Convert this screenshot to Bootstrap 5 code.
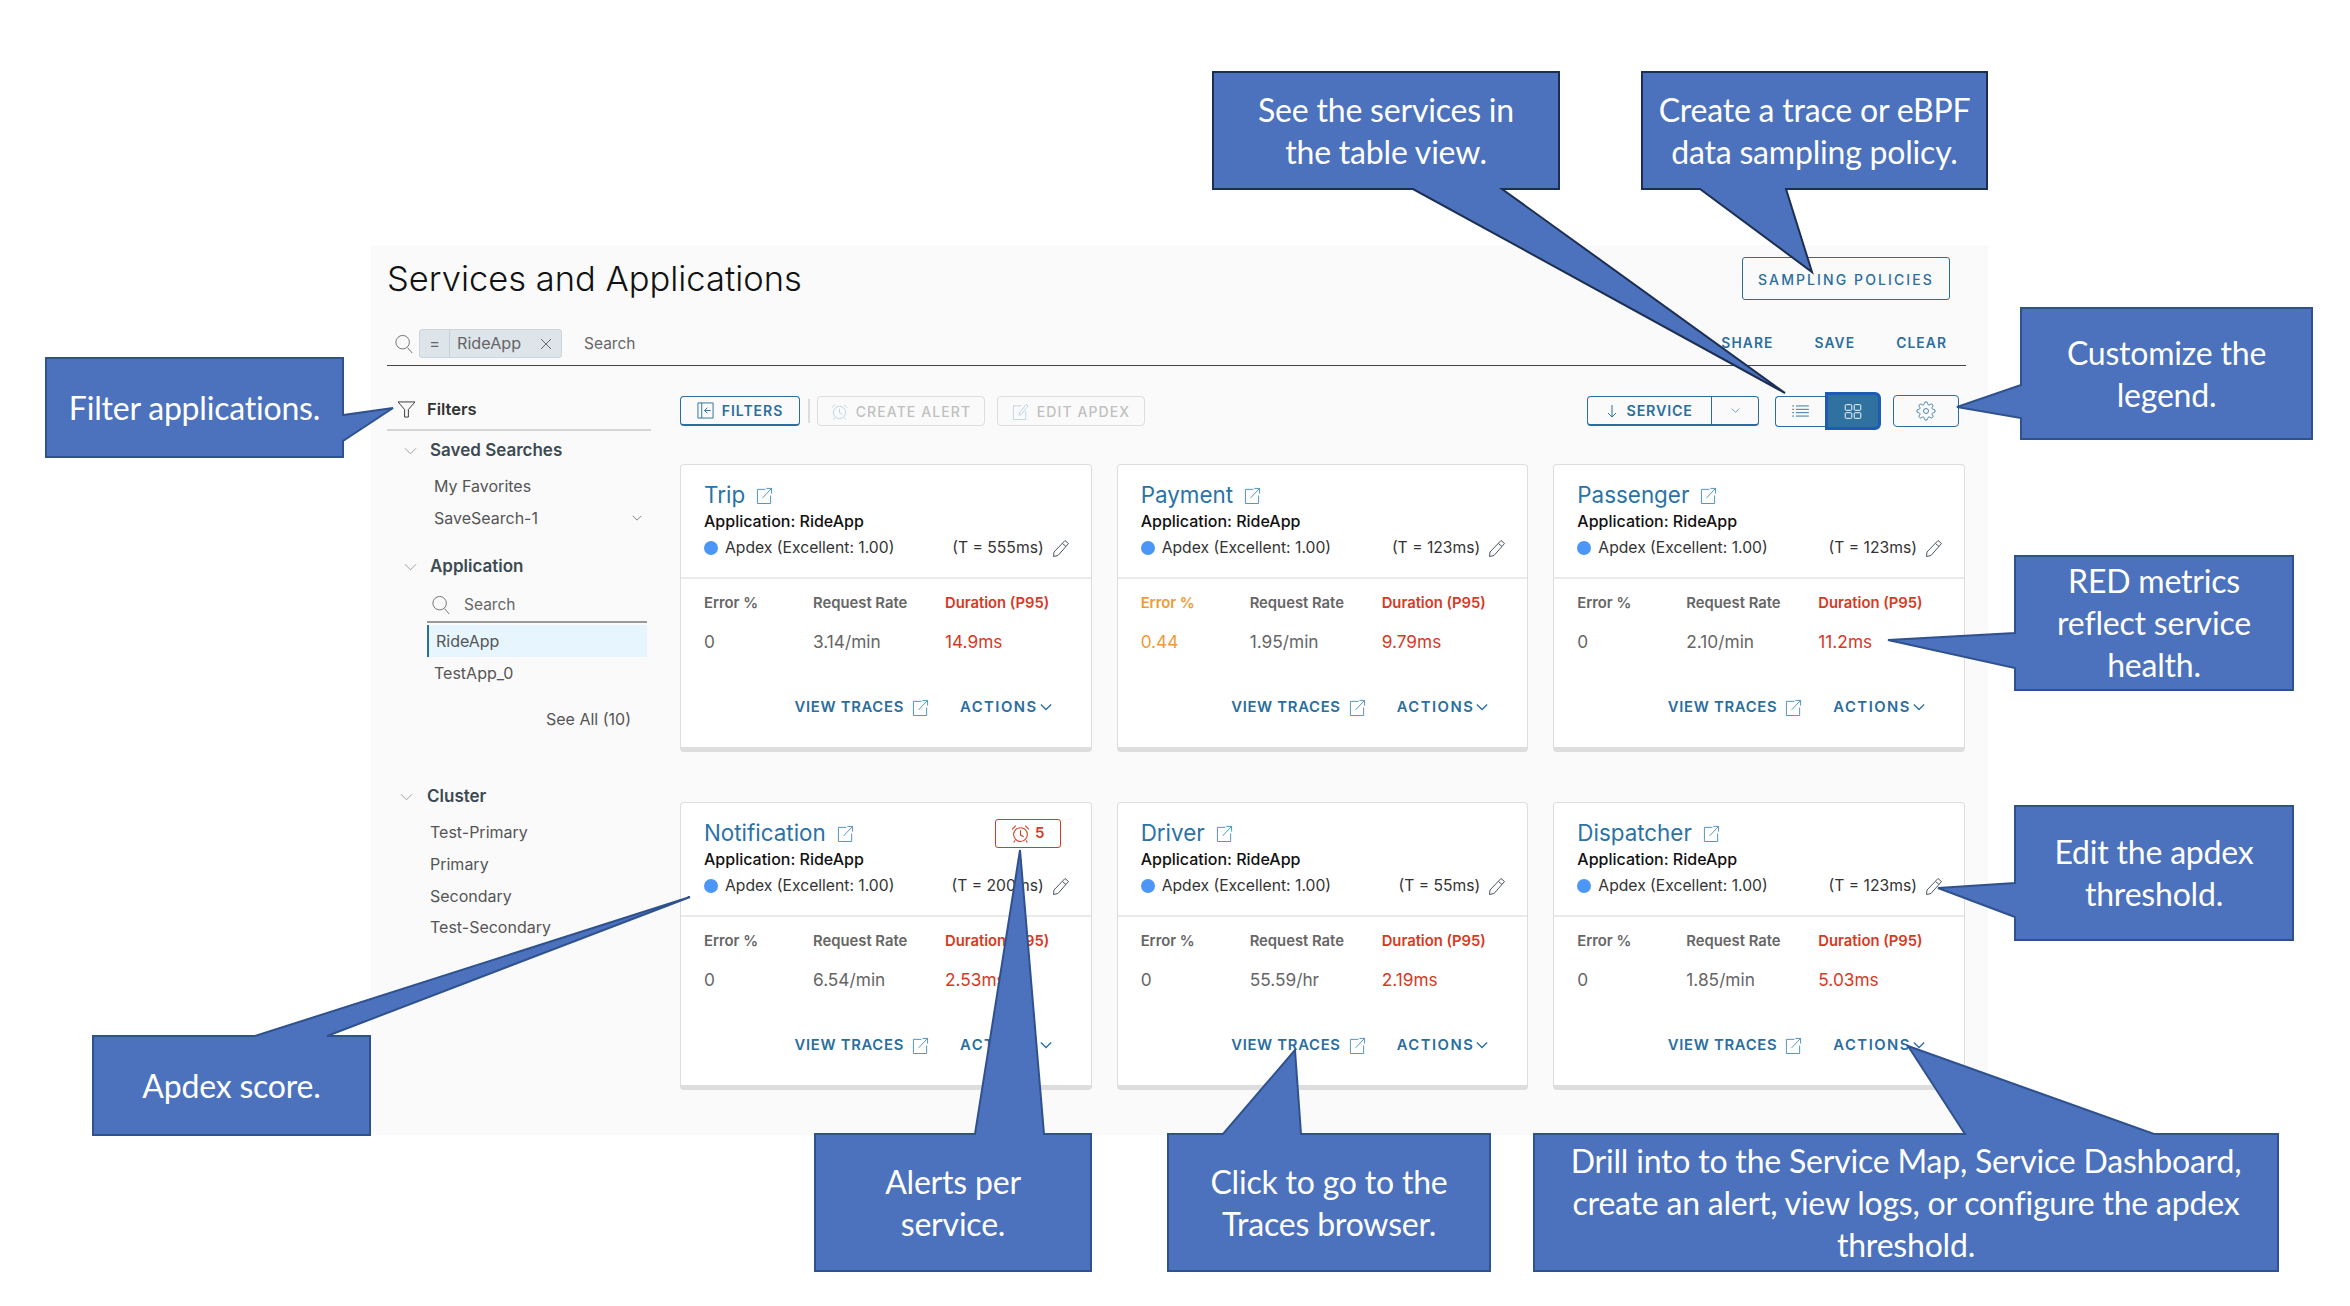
<!DOCTYPE html>
<html lang="en">
<head>
    <meta charset="UTF-8">
    <title>Services and Applications</title>
    <link href="https://cdn.jsdelivr.net/npm/bootstrap@5.3.0/dist/css/bootstrap.min.css" rel="stylesheet">
    <style>
        body {
            position: relative;
            width: 2350px;
            height: 1306px;
            overflow: hidden;
            background: #fff;
            font-family: Inter, "Liberation Sans", sans-serif;
            color: #444;
        }
        .ico { fill: none; stroke: currentColor; stroke-width: 1; flex: none; }
        .svc-panel {
            width: 1617px;
            height: 890px;
            margin: 245px 0 0 371px;
            padding: 12px 22px 0 16px;
            background: #fafafa;
        }
        .svc-head { height: 43px; }
        .svc-title { font-size: 34.5px; font-weight: 300; line-height: 43px; color: #111; margin: 0; }
        .btn-sampling {
            height: 43px;
            width: 208px;
            margin-right: 16px;
            padding: 2px 0 0;
            font-size: 14px;
            font-weight: 500;
            letter-spacing: 2.1px;
            color: #2b6e9e;
            border: 1px solid #2b6e9e;
            border-radius: 3px;
        }
        .svc-search { height: 44px; margin-top: 22px; border-bottom: 1px solid #444; }
        .search-mag { color: #666; margin: 0 6px 0 8px; }
        .chip-box {
            height: 29px;
            width: 143px;
            background: #dde4ea;
            border: 1px solid #cdd5dc;
            border-radius: 3px;
            font-size: 16.2px;
            color: #666;
        }
        .chip-eq { width: 30px; border-right: 1px solid #c8d0d7; text-align: center; }
        .chip-val { padding-left: 7px; gap: 19px; }
        .search-word { margin-left: 22px; font-size: 15.5px; color: #666; }
        .link-trio { gap: 41px; margin-right: 19px; font-size: 13.8px; font-weight: 600; letter-spacing: 1.1px; color: #2b6e9e; }
        .side-col { width: 264px; padding-top: 22px; margin-right: 29px; flex: none; }
        .side-filters { height: 43px; padding: 2px 0 0 10px; border-bottom: 2px solid #d5d5d5; font-size: 16.5px; font-weight: 600; color: #333; gap: 11px; }
        .side-h { height: 32px; font-size: 17px; font-weight: 600; color: #3c4a52; }
        .side-h svg { color: #999; margin: 0 13px 0 17px; }
        .side-saved { margin-top: 3.5px; }
        .side-i { height: 32px; padding-left: 47px; font-size: 16px; color: #555; }
        .side-i svg { margin-right: 9px; color: #555; }
        .side-c { margin-top: 46px; }
        .side-c .side-h svg { margin: 0 14px 0 13px; }
        .side-c .side-i { padding-left: 43px; height: 31.7px; }
        .side-first { margin-top: 3px; }
        .side-app { margin-top: 17px; }
        .side-more { margin-top: 14px; padding-right: 20px; }
        .app-find { height: 33px; margin: 7px 4px 2px 40px; border-bottom: 2px solid #999; font-size: 15.5px; color: #666; gap: 14px; padding-left: 5px; }
        .app-on { height: 32px; margin: 0 4px 0 40px; padding-left: 7px; background: #e6f5fe; border-left: 2px solid #2b6e9e; font-size: 16px; color: #555; }
        .main-col { width: 1286px; padding-top: 30px; flex: none; }
        .bar-top { height: 30px; margin-bottom: 38px; }
        .btn-tool {
            height: 30px;
            padding: 0;
            font-size: 14px;
            font-weight: 600;
            letter-spacing: 1px;
            color: #2b6e9e;
            border: 1px solid #2b6e9e;
            border-bottom-width: 2px;
            border-radius: 4px;
            gap: 8px;
        }
        .btn-tool:disabled { color: #c0c0c0; border: 1px solid #ddd; opacity: 1; font-weight: 500; letter-spacing: 1.1px; }
        .btn-tool:disabled svg { color: #bcd4e4; }
        .w-filters { width: 120px; }
        .bar-sep { width: 2px; height: 24px; background: #ddd; margin: 0 7px 0 8px; }
        .w-alert { width: 168px; margin-right: 12px; }
        .w-apdex { width: 148px; }
        .sort-split { width: 172px; height: 30px; border: 1px solid #2b6e9e; border-bottom-width: 2px; border-radius: 4px; font-size: 14.3px; font-weight: 600; letter-spacing: .8px; color: #2b6e9e; }
        .sort-a { width: 125px; gap: 10px; border-right: 1px solid #2b6e9e; }
        .sort-b { width: 46px; }
        .view-pair { margin-left: 16px; color: #2b6e9e; }
        .view-list { width: 50px; height: 31px; border: 1px solid #2b6e9e; border-right: 0; border-radius: 4px 0 0 4px; }
        .view-grid { width: 56px; height: 38px; margin: 0; background: #2f719f; border: 3px solid #1d5cb4; border-radius: 0 6px 6px 0; color: #fff; }
        .view-gear { width: 66px; height: 32px; margin: 0 7px 0 12px; border: 1px solid #2b6e9e; border-radius: 4px; color: #2b6e9e; }
        .svc-row { --bs-gutter-x: 25px; --bs-gutter-y: 50px; width: 1310px; }
        .svc-card { height: 288px; border-radius: 4px; background: #fff; border: 1px solid #ddd; border-bottom: 5px solid #ddd; }
        .svc-card-top { height: 114px; padding: 16px 21px 0 23px; border-bottom: 2px solid #eaeaea; }
        .svc-name-row { height: 28px; }
        .svc-name { font-size: 22.4px; line-height: 28px; color: #2b72a6; gap: 11px; }
        .svc-name svg { color: #4a8fbd; }
        .alert-tag { width: 66px; height: 29px; margin-right: 9px; border: 1px solid #d63a25; border-radius: 3px; color: #d63a25; font-size: 15px; font-weight: 600; gap: 5px; }
        .svc-app { height: 22px; margin-top: 1px; font-size: 16px; font-weight: 500; color: #111; line-height: 22px; }
        .svc-apdex { height: 22px; margin-top: 5px; font-size: 15.7px; line-height: 22px; color: #333; }
        .apdex-dot { width: 14px; height: 14px; border-radius: 50%; background: #4c96f7; margin-right: 7px; }
        .svc-t { margin-right: 8px; }
        .svc-edit { color: #4a5862; }
        .svc-card-body { padding: 14px 0 0 23px; }
        .stat-grid { display: grid; grid-template-columns: 109px 132px 1fr; }
        .stat-l { height: 20px; font-size: 14.8px; font-weight: 600; line-height: 20px; color: #666; }
        .stat-v { height: 24px; margin-top: 17px; font-size: 17.3px; line-height: 24px; color: #666; }
        .is-warn { color: #f09a35; }
        .is-red { color: #d63a25; }
        .svc-acts { height: 24px; margin-top: 41px; padding-right: 39px; font-size: 14.8px; font-weight: 600; letter-spacing: .7px; color: #2b6e9e; }
        .svc-acts svg { color: #4a8fbd; }
        .act-traces { gap: 8px; margin-right: 31px; }
        .act-more { gap: 2px; letter-spacing: 1.5px; }
        .act-more svg { color: #2b6e9e; stroke-width: 1.5; }
        .note-layer { position: absolute; inset: 0; width: 2350px; height: 1306px; pointer-events: none; }
        .note-layer path { fill: #4c72bd; stroke: #2f528f; stroke-width: 2; stroke-linejoin: miter; }
        .note-layer path.is-dark { stroke: #1c2f52; }
        .note {
            position: absolute;
            display: flex;
            align-items: center;
            justify-content: center;
            text-align: center;
            color: #fff;
            font-family: Lato, "Liberation Sans", sans-serif;
            font-size: 32px;
            line-height: 42px;
            letter-spacing: -.2px;
        }
    </style>
</head>
<body>
    <svg width="0" height="0" class="position-absolute">
        <symbol id="i-search" viewBox="0 0 20 22"><circle cx="8.5" cy="9" r="7.5"/><path d="M14 15l5 6"/></symbol>
        <symbol id="i-funnel" viewBox="0 0 20 18"><path d="M1 1h18l-7 8v8H8V9z"/></symbol>
        <symbol id="i-down" viewBox="0 0 14 8"><path d="M1 1l6 6 6-6"/></symbol>
        <symbol id="i-x" viewBox="0 0 12 12"><path d="M1 1l10 10M11 1L1 11"/></symbol>
        <symbol id="i-ext" viewBox="0 0 18 18"><path d="M10 2.5H1.500v15h14V9M7 11.500 16.500 1.500M11 1.500h5.500V7"/></symbol>
        <symbol id="i-pencil" viewBox="0 0 18 18"><path d="M13 1.500l3.500 3L6 16.500l-4.500 1 .5-4.500zM10.500 4.500l3.500 3"/></symbol>
        <symbol id="i-alarm" viewBox="0 0 18 18"><circle cx="9" cy="10" r="6.500"/><path d="M9 6v4.500l3 1.500M1 5l3.500-3.500M17 5l-3.500-3.500M4 15.500L2.500 17.500M14 15.500l1.500 2"/></symbol>
        <symbol id="i-panel" viewBox="0 0 18 18"><path d="M1 1h16v16H1zM5 1v16M14.500 9H8M11 6L8 9l3 3"/></symbol>
        <symbol id="i-edit" viewBox="0 0 18 18"><path d="M10 3H1.500v14.500h13V9M8 10.500L15 1.500l2 1.500-7 9-2.500 1z"/></symbol>
        <symbol id="i-arrow" viewBox="0 0 10 14"><path d="M5 1v12M1 9l4 4 4-4"/></symbol>
        <symbol id="i-list" viewBox="0 0 18 13"><path d="M0 1h2M4 1h14M0 4.700h2M4 4.700h14M0 8.300h2M4 8.300h14M0 12h2M4 12h14"/></symbol>
        <symbol id="i-grid" viewBox="0 0 18 16"><rect x=".7" y=".7" width="7" height="6" rx="1"/><rect x="10.300" y=".7" width="7" height="6" rx="1"/><rect x=".7" y="9.300" width="7" height="6" rx="1"/><rect x="10.300" y="9.300" width="7" height="6" rx="1"/></symbol>
        <symbol id="i-gear" viewBox="0 0 24 24"><circle cx="12" cy="12" r="3"/><path d="M19.400 15a1.650 1.650 0 0 0 .33 1.820l.06.06a2 2 0 0 1 0 2.830 2 2 0 0 1-2.830 0l-.06-.06a1.650 1.650 0 0 0-1.820-.33 1.650 1.650 0 0 0-1 1.510V21a2 2 0 0 1-2 2 2 2 0 0 1-2-2v-.09A1.650 1.650 0 0 0 9 19.400a1.650 1.650 0 0 0-1.820.33l-.06.06a2 2 0 0 1-2.830 0 2 2 0 0 1 0-2.830l.06-.06a1.650 1.650 0 0 0 .33-1.820 1.650 1.650 0 0 0-1.510-1H3a2 2 0 0 1-2-2 2 2 0 0 1 2-2h.09A1.650 1.650 0 0 0 4.600 9a1.650 1.650 0 0 0-.33-1.820l-.06-.06a2 2 0 0 1 0-2.830 2 2 0 0 1 2.830 0l.06.06a1.650 1.650 0 0 0 1.820.33H9a1.650 1.650 0 0 0 1-1.510V3a2 2 0 0 1 2-2 2 2 0 0 1 2 2v.09a1.650 1.650 0 0 0 1 1.510 1.650 1.650 0 0 0 1.820-.33l.06-.06a2 2 0 0 1 2.830 0 2 2 0 0 1 0 2.830l-.06.06a1.650 1.650 0 0 0-.33 1.820V9a1.650 1.650 0 0 0 1.510 1H21a2 2 0 0 1 2 2 2 2 0 0 1-2 2h-.09a1.650 1.650 0 0 0-1.510 1z"/></symbol>
    </svg>

    <div class="svc-panel">
        <div class="svc-head d-flex justify-content-between">
            <h1 class="svc-title">Services and Applications</h1>
            <button class="btn btn-sampling">SAMPLING POLICIES</button>
        </div>

        <div class="svc-search d-flex align-items-center">
            <svg class="ico search-mag" width="18" height="20"><use href="#i-search"/></svg>
            <div class="chip-box d-flex align-items-stretch">
                <span class="chip-eq d-flex align-items-center justify-content-center">=</span>
                <span class="chip-val d-flex align-items-center">RideApp <svg class="ico" width="12" height="12"><use href="#i-x"/></svg></span>
            </div>
            <span class="search-word">Search</span>
            <div class="link-trio d-flex ms-auto"><span>SHARE</span><span>SAVE</span><span>CLEAR</span></div>
        </div>

        <div class="d-flex">
            <!-- left filter column -->
            <div class="side-col">
                <div class="side-filters d-flex align-items-center"><svg class="ico" width="19" height="17"><use href="#i-funnel"/></svg>Filters</div>
                <div class="side-h side-saved d-flex align-items-center"><svg class="ico" width="13" height="8"><use href="#i-down"/></svg>Saved Searches</div>
                <div class="side-i side-first d-flex align-items-center">My Favorites</div>
                <div class="side-i d-flex align-items-center justify-content-between">SaveSearch-1<svg class="ico" width="10" height="6"><use href="#i-down"/></svg></div>
                <div class="side-h side-app d-flex align-items-center"><svg class="ico" width="13" height="8"><use href="#i-down"/></svg>Application</div>
                <div class="app-find d-flex align-items-center"><svg class="ico" width="18" height="20"><use href="#i-search"/></svg>Search</div>
                <div class="app-on d-flex align-items-center">RideApp</div>
                <div class="side-i d-flex align-items-center">TestApp_0</div>
                <div class="side-i side-more d-flex align-items-center justify-content-end">See All (10)</div>
                <div class="side-c">
                    <div class="side-h d-flex align-items-center"><svg class="ico" width="13" height="8"><use href="#i-down"/></svg>Cluster</div>
                    <div class="side-i d-flex align-items-center mt-1">Test-Primary</div>
                    <div class="side-i d-flex align-items-center">Primary</div>
                    <div class="side-i d-flex align-items-center">Secondary</div>
                    <div class="side-i d-flex align-items-center">Test-Secondary</div>
                </div>
            </div>

            <!-- toolbar and service cards -->
            <div class="main-col">
                <div class="bar-top d-flex align-items-center">
                    <button class="btn btn-tool w-filters d-flex align-items-center justify-content-center"><svg class="ico" width="17" height="17"><use href="#i-panel"/></svg>FILTERS</button>
                    <span class="bar-sep"></span>
                    <button class="btn btn-tool w-alert d-flex align-items-center justify-content-center" disabled><svg class="ico" width="17" height="17"><use href="#i-alarm"/></svg>CREATE ALERT</button>
                    <button class="btn btn-tool w-apdex d-flex align-items-center justify-content-center" disabled><svg class="ico" width="17" height="17"><use href="#i-edit"/></svg>EDIT APDEX</button>
                    <div class="sort-split d-flex ms-auto">
                        <span class="sort-a d-flex align-items-center justify-content-center"><svg class="ico" width="10" height="14"><use href="#i-arrow"/></svg>SERVICE</span>
                        <span class="sort-b d-flex align-items-center justify-content-center"><svg class="ico" width="9" height="5"><use href="#i-down"/></svg></span>
                    </div>
                    <div class="view-pair d-flex align-items-center">
                        <span class="view-list d-flex align-items-center justify-content-center"><svg class="ico" width="17" height="12"><use href="#i-list"/></svg></span>
                        <span class="view-grid d-flex align-items-center justify-content-center"><svg class="ico" width="18" height="15"><use href="#i-grid"/></svg></span>
                    </div>
                    <span class="view-gear d-flex align-items-center justify-content-center"><svg class="ico" width="20" height="20"><use href="#i-gear"/></svg></span>
                </div>
                <div class="row svc-row" id="svcRow"></div>
            </div>
        </div>
    </div>

    <!-- annotation callouts on top of the screenshot -->
    <svg class="note-layer" viewBox="0 0 2350 1306" id="noteShapes"></svg>
    <div id="noteTexts"></div>

    <script src="https://cdn.jsdelivr.net/npm/bootstrap@5.3.0/dist/js/bootstrap.bundle.min.js"></script>
    <script>
        const services = [
            { name: 'Trip', t: '555ms', err: '0', rate: '3.14/min', dur: '14.9ms' },
            { name: 'Payment', t: '123ms', err: '0.44', warn: true, rate: '1.95/min', dur: '9.79ms' },
            { name: 'Passenger', t: '123ms', err: '0', rate: '2.10/min', dur: '11.2ms' },
            { name: 'Notification', t: '200ms', err: '0', rate: '6.54/min', dur: '2.53ms', alerts: 5 },
            { name: 'Driver', t: '55ms', err: '0', rate: '55.59/hr', dur: '2.19ms' },
            { name: 'Dispatcher', t: '123ms', err: '0', rate: '1.85/min', dur: '5.03ms' }
        ];

        const icon = (id, w, h) => `<svg class="ico" width="${w}" height="${h}"><use href="#${id}"/></svg>`;

        document.getElementById('svcRow').innerHTML = services.map(s => `
            <div class="col-4">
                <div class="svc-card">
                    <div class="svc-card-top">
                        <div class="svc-name-row d-flex justify-content-between align-items-center">
                            <span class="svc-name d-flex align-items-center">${s.name} ${icon('i-ext', 17, 17)}</span>
                            ${s.alerts ? `<span class="alert-tag d-flex align-items-center justify-content-center">${icon('i-alarm', 19, 19)}${s.alerts}</span>` : ''}
                        </div>
                        <div class="svc-app">Application: RideApp</div>
                        <div class="svc-apdex d-flex align-items-center">
                            <span class="apdex-dot"></span>Apdex (Excellent: 1.00)
                            <span class="svc-t ms-auto">(T = ${s.t})</span>
                            <span class="svc-edit d-flex">${icon('i-pencil', 18, 18)}</span>
                        </div>
                    </div>
                    <div class="svc-card-body">
                        <div class="stat-grid">
                            <div class="stat-l ${s.warn ? 'is-warn' : ''}">Error %</div>
                            <div class="stat-l">Request Rate</div>
                            <div class="stat-l is-red">Duration (P95)</div>
                            <div class="stat-v ${s.warn ? 'is-warn' : ''}">${s.err}</div>
                            <div class="stat-v">${s.rate}</div>
                            <div class="stat-v is-red">${s.dur}</div>
                        </div>
                        <div class="svc-acts d-flex justify-content-end align-items-center">
                            <span class="act-traces d-flex align-items-center">VIEW TRACES ${icon('i-ext', 17, 17)}</span>
                            <span class="act-more d-flex align-items-center">ACTIONS ${icon('i-down', 12, 8)}</span>
                        </div>
                    </div>
                </div>
            </div>`).join('');

        // x, y, w, h of each box, then the pointer as extra outline points in clockwise order
        const notes = [
            { box: [1213, 72, 346, 117], side: 'b', dark: true, ptr: [[1502, 189], [1785, 393], [1413, 189]], lines: ['See the services in', 'the table view.'] },
            { box: [1642, 72, 345, 117], side: 'b', dark: true, ptr: [[1786, 189], [1812, 272], [1700, 189]], lines: ['Create a trace or eBPF', 'data sampling policy.'] },
            { box: [2021, 308, 291, 131], side: 'l', ptr: [[1957, 407], [2021, 385]], start: [2021, 418], lines: ['Customize the', 'legend.'] },
            { box: [2015, 556, 278, 134], side: 'l', ptr: [[1888, 640], [2015, 633]], start: [2015, 668], lines: ['RED metrics', 'reflect service', 'health.'] },
            { box: [2015, 806, 278, 134], side: 'l', ptr: [[1938, 888], [2015, 883]], start: [2015, 917], lines: ['Edit the apdex', 'threshold.'] },
            { box: [46, 358, 297, 99], side: 'r', ptr: [[393, 408], [343, 441]], start: [343, 415], lines: ['Filter applications.'] },
            { box: [93, 1036, 277, 99], side: 't', ptr: [[255, 1036], [690, 897], [327, 1036]], lines: ['Apdex score.'] },
            { box: [815, 1134, 276, 137], side: 't', ptr: [[975, 1134], [1020, 850], [1044, 1134]], lines: ['Alerts per', 'service.'] },
            { box: [1168, 1134, 322, 137], side: 't', ptr: [[1223, 1134], [1295, 1050], [1301, 1134]], lines: ['Click to go to the', 'Traces browser.'] },
            { box: [1534, 1134, 744, 137], side: 't', ptr: [[1965, 1134], [1908, 1046], [2154, 1134]], lines: ['Drill into to the Service Map, Service Dashboard,', 'create an alert, view logs, or configure the apdex', 'threshold.'] }
        ];

        const outline = n => {
            const [x, y, w, h] = n.box;
            const r = x + w, b = y + h;
            const p = n.ptr.map(q => q.join(' ')).join(' L');
            if (n.side === 't') return `M${x} ${y} L${p} L${r} ${y} L${r} ${b} L${x} ${b}Z`;
            if (n.side === 'b') return `M${x} ${y} L${r} ${y} L${r} ${b} L${p} L${x} ${b}Z`;
            if (n.side === 'r') return `M${x} ${y} L${r} ${y} L${n.start.join(' ')} L${p} L${r} ${b} L${x} ${b}Z`;
            return `M${x} ${y} L${p.split(' L')[1]} L${p.split(' L')[0]} L${n.start.join(' ')} L${x} ${b} L${r} ${b} L${r} ${y}Z`;
        };

        document.getElementById('noteShapes').innerHTML = notes.map(n => `<path class="${n.dark ? 'is-dark' : ''}" d="${outline(n)}"/>`).join('');
        document.getElementById('noteTexts').innerHTML = notes.map(n =>
            `<div class="note" style="left:${n.box[0]}px;top:${n.box[1]}px;width:${n.box[2]}px;height:${n.box[3]}px"><div>${n.lines.join('<br>')}</div></div>`
        ).join('');
    </script>
</body>
</html>
